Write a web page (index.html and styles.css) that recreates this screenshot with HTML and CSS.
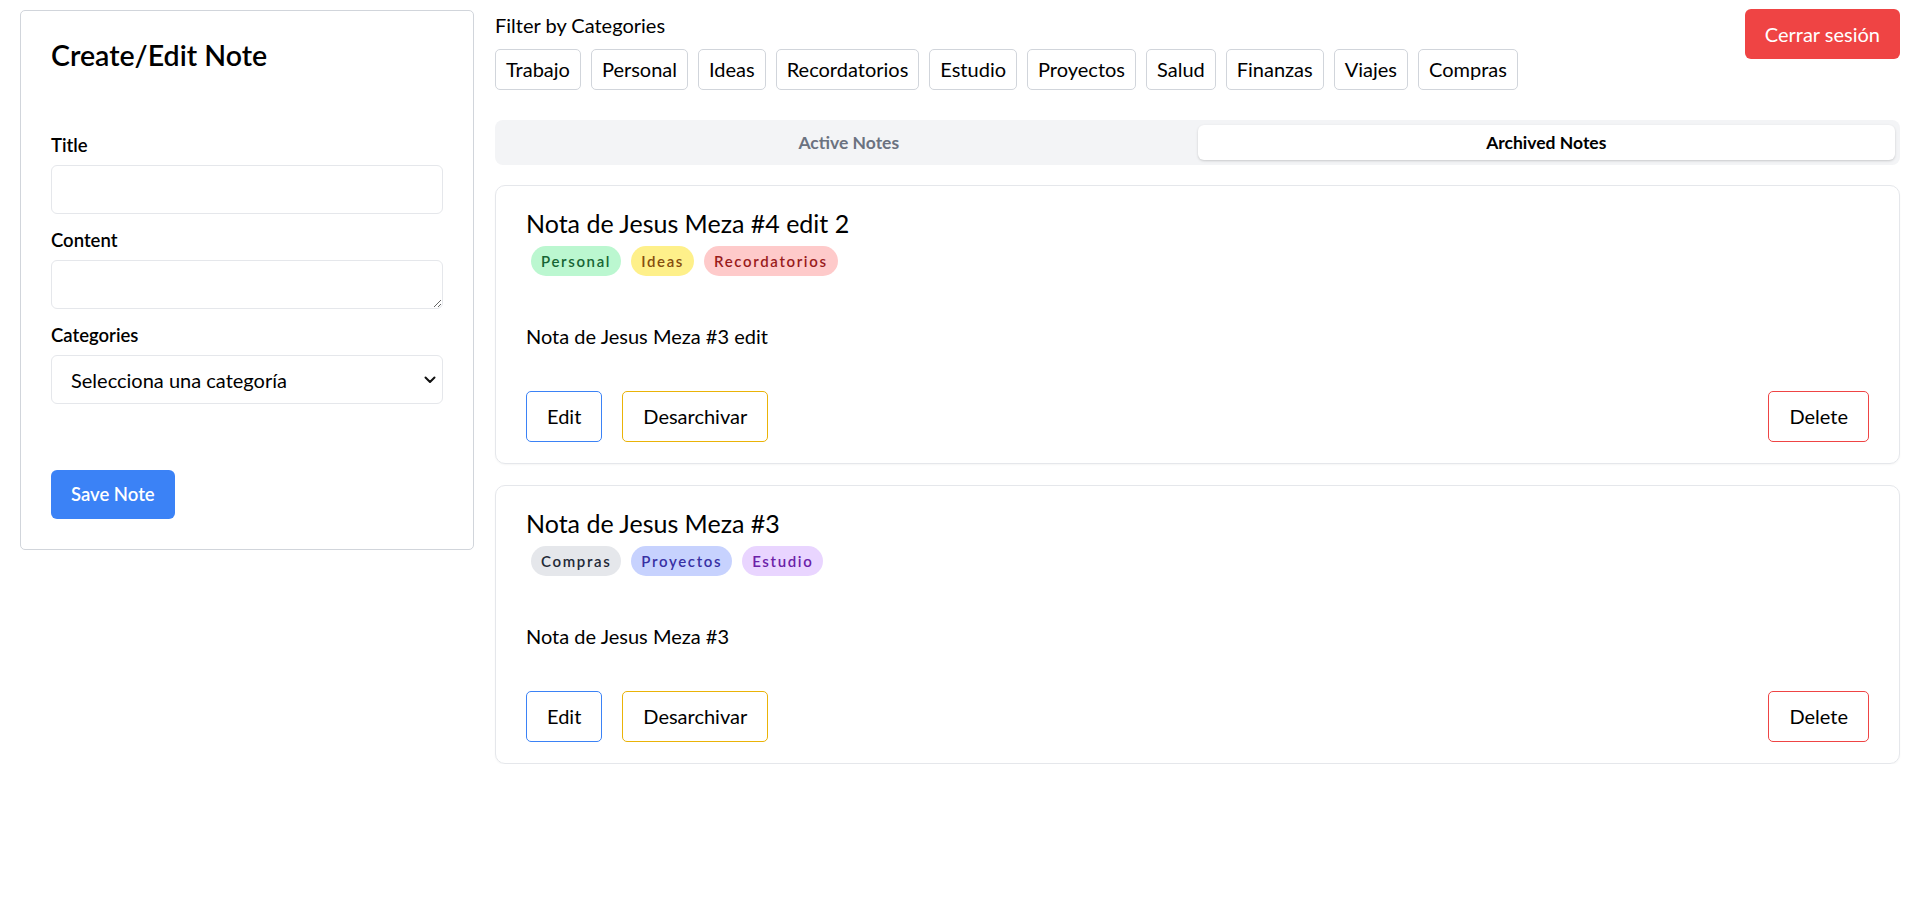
FILE: index.html
```html
<!DOCTYPE html>
<html lang="es">
<head>
<meta charset="utf-8">
<title>Notes</title>
<link rel="stylesheet" href="styles.css">
</head>
<body>
<div class="app">
  <aside class="editor">
    <h2 class="editor-title">Create/Edit Note</h2>
    <form class="note-form">
      <div class="field">
        <label class="field-label" for="title">Title</label>
        <input class="field-input" id="title" type="text">
      </div>
      <div class="field">
        <label class="field-label" for="content">Content</label>
        <textarea class="field-input field-textarea" id="content"></textarea>
      </div>
      <div class="field">
        <label class="field-label" for="cat">Categories</label>
        <div class="select-wrap">
          <select class="field-input field-select" id="cat">
            <option>Selecciona una categoría</option>
          </select>
          <svg class="select-chevron" width="12" height="8" viewBox="0 0 12 8"><path d="M1.5 1.5 L6 6 L10.5 1.5" fill="none" stroke="#111" stroke-width="2" stroke-linecap="round" stroke-linejoin="round"/></svg>
        </div>
      </div>
      <button class="save-btn" type="button">Save Note</button>
    </form>
  </aside>

  <main class="board">
    <header class="toolbar">
      <div class="filter">
        <p class="filter-label">Filter by Categories</p>
        <div class="filter-list">
          <button class="chip">Trabajo</button>
          <button class="chip">Personal</button>
          <button class="chip">Ideas</button>
          <button class="chip">Recordatorios</button>
          <button class="chip">Estudio</button>
          <button class="chip">Proyectos</button>
          <button class="chip">Salud</button>
          <button class="chip">Finanzas</button>
          <button class="chip">Viajes</button>
          <button class="chip">Compras</button>
        </div>
      </div>
      <button class="logout">Cerrar sesión</button>
    </header>

    <div class="tabs">
      <button class="tab">Active Notes</button>
      <button class="tab tab-active">Archived Notes</button>
    </div>

    <section class="notes">
      <article class="note">
        <h3 class="note-title">Nota de Jesus Meza #4 edit 2</h3>
        <div class="tags">
          <span class="tag tag-green">Personal</span>
          <span class="tag tag-yellow">Ideas</span>
          <span class="tag tag-red">Recordatorios</span>
        </div>
        <p class="note-body">Nota de Jesus Meza #3 edit</p>
        <div class="actions">
          <button class="btn btn-edit">Edit</button>
          <button class="btn btn-archive">Desarchivar</button>
          <button class="btn btn-delete">Delete</button>
        </div>
      </article>
      <article class="note">
        <h3 class="note-title">Nota de Jesus Meza #3</h3>
        <div class="tags">
          <span class="tag tag-gray">Compras</span>
          <span class="tag tag-indigo">Proyectos</span>
          <span class="tag tag-purple">Estudio</span>
        </div>
        <p class="note-body">Nota de Jesus Meza #3</p>
        <div class="actions">
          <button class="btn btn-edit">Edit</button>
          <button class="btn btn-archive">Desarchivar</button>
          <button class="btn btn-delete">Delete</button>
        </div>
      </article>
    </section>
  </main>
</div>
</body>
</html>
```

FILE: styles.css
```css
* { box-sizing: border-box; }

html, body {
  margin: 0;
  padding: 0;
  background: #fff;
}

body {
  font-family: "Lato", "Open Sans", sans-serif;
  color: #000;
}

button, input, select, textarea {
  font-family: inherit;
  color: inherit;
}

.app {
  display: flex;
  align-items: flex-start;
  gap: 21px;
  padding: 10px 6px 0 20px;
}

/* ---------- editor ---------- */
.editor {
  flex: 0 0 454px;
  width: 454px;
  border: 1px solid #d1d5db;
  border-radius: 5px;
  padding: 24px 30px 30px;
}

.editor-title {
  margin: 0 0 58px;
  font-size: 28.5px;
  line-height: 40px;
  font-weight: 600;
}

.note-form {
  display: flex;
  flex-direction: column;
  margin: 0;
}

.field + .field { margin-top: 14px; }

.field-label {
  display: block;
  font-size: 18.5px;
  line-height: 25px;
  font-weight: 600;
  margin-bottom: 7px;
}

.field-input {
  display: block;
  width: 100%;
  height: 49px;
  border: 1px solid #e5e7eb;
  border-radius: 6px;
  background: #fff;
  font-size: 20px;
  padding: 0 19px;
  outline: none;
}

.field-textarea {
  resize: vertical;
  padding: 8px 12px;
}

.select-wrap { position: relative; }

.field-select {
  appearance: none;
  -webkit-appearance: none;
  color: #000;
}

.select-chevron {
  position: absolute;
  right: 7px;
  top: 21px;
  pointer-events: none;
}

.save-btn {
  align-self: flex-start;
  margin-top: 66px;
  border: 0;
  border-radius: 6px;
  background: #3b82f6;
  color: #fff;
  font-size: 18.5px;
  line-height: 29px;
  font-weight: 600;
  padding: 10px 20px;
}

/* ---------- board ---------- */
.board {
  flex: 1 1 auto;
  min-width: 0;
}

.toolbar {
  display: flex;
  justify-content: space-between;
  align-items: flex-start;
}

.filter-label {
  margin: 0 0 9px;
  font-size: 20px;
  line-height: 30px;
}

.filter-list {
  display: flex;
  flex-wrap: wrap;
  gap: 10px;
}

.chip {
  background: #fff;
  border: 1px solid #d1d5db;
  border-radius: 5px;
  font-size: 20px;
  line-height: 29px;
  padding: 5px 10px;
}

.logout {
  margin-top: -1px;
  border: 0;
  border-radius: 6px;
  background: #ef4444;
  color: #fff;
  font-size: 20px;
  line-height: 30px;
  padding: 10px 20px;
}

.tabs {
  margin-top: 30px;
  display: grid;
  grid-template-columns: 1fr 1fr;
  background: #f3f4f6;
  border-radius: 8px;
  padding: 5px;
}

.tab {
  border: 0;
  background: transparent;
  border-radius: 6px;
  font-size: 17.5px;
  line-height: 25px;
  font-weight: 700;
  padding: 5px 0;
  color: #6b7280;
}

.tab-active {
  background: #fff;
  color: #000;
  box-shadow: 0 1px 3px rgba(0,0,0,0.12), 0 1px 2px rgba(0,0,0,0.06);
}

.notes {
  margin-top: 20px;
  display: flex;
  flex-direction: column;
  gap: 21px;
}

.note {
  border: 1px solid #e5e7eb;
  border-radius: 10px;
  padding: 20px 30px 21px;
  box-shadow: 0 1px 2px rgba(0,0,0,0.04);
}

.note-title {
  margin: 0;
  font-size: 25px;
  line-height: 35px;
  font-weight: 400;
}

.tags {
  margin-top: 5px;
  display: flex;
}

.tag {
  margin: 0 5px;
  border-radius: 9999px;
  font-size: 15px;
  line-height: 20px;
  font-weight: 600;
  letter-spacing: 0.11em;
  padding: 5px 10px;
}

.tag-green  { background: #bbf7d0; color: #166534; }
.tag-yellow { background: #fef08a; color: #854d0e; }
.tag-red    { background: #fecaca; color: #991b1b; }
.tag-gray   { background: #e5e7eb; color: #1f2937; }
.tag-indigo { background: #c7d2fe; color: #3730a3; }
.tag-purple { background: #e9d5ff; color: #6b21a8; }

.note-body {
  margin: 45px 0 0;
  font-size: 20px;
  line-height: 30px;
}

.actions {
  margin-top: 40px;
  display: flex;
  gap: 20px;
}

.btn {
  background: #fff;
  border: 1px solid;
  border-radius: 5px;
  font-size: 20px;
  line-height: 29px;
  padding: 10px 20px;
}

.btn-edit { border-color: #3b82f6; }
.btn-archive { border-color: #eab308; }
.btn-delete { border-color: #ef4444; margin-left: auto; }
```
